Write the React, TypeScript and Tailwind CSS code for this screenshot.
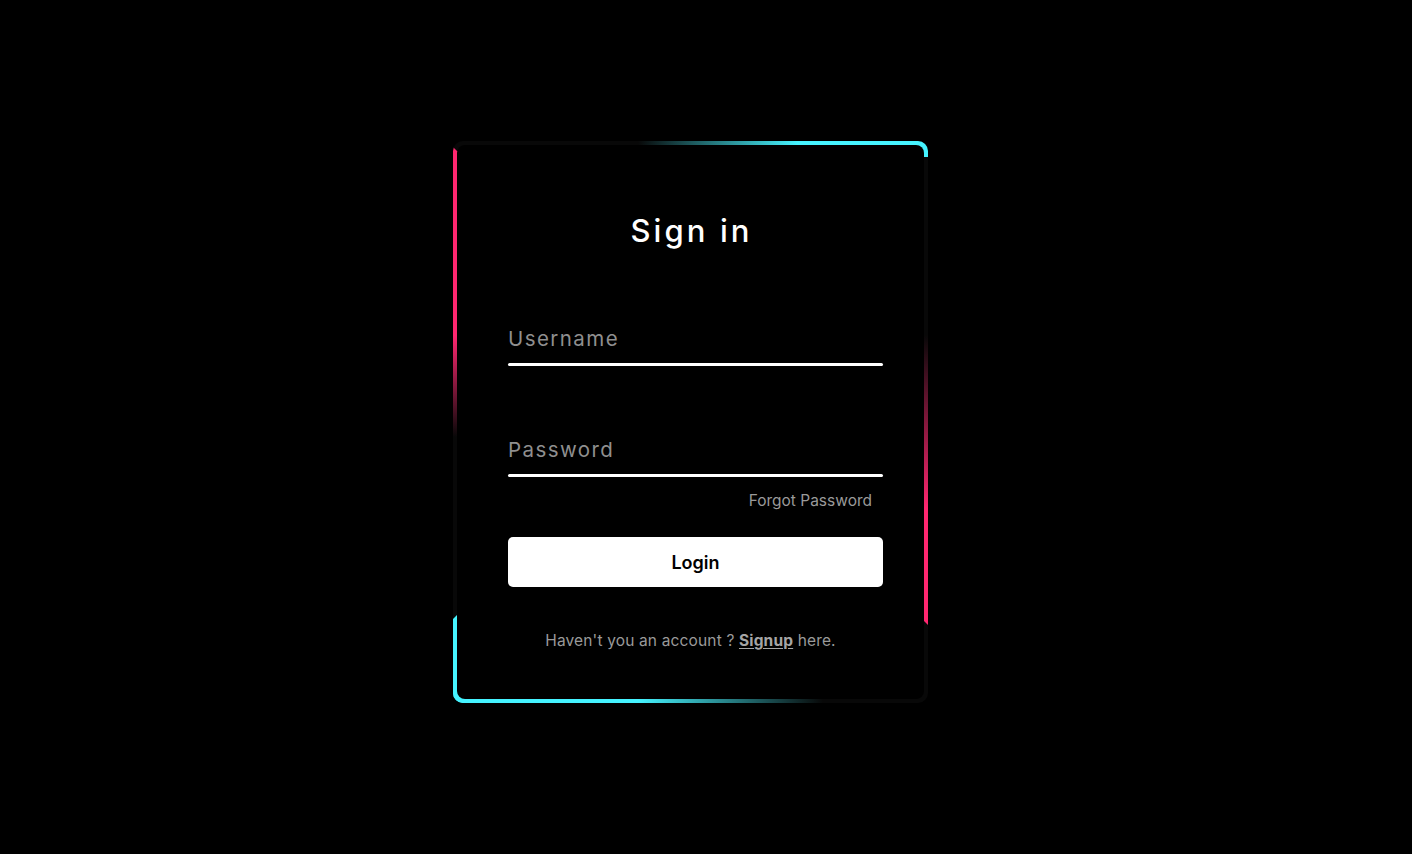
import React from "react";

export default function App() {
  const font = { fontFamily: "Inter, 'Open Sans', 'Noto Sans', sans-serif" };
  return (
    <div className="w-full min-h-[854px] bg-black flex items-center justify-center pr-[31px] pb-[10px]" style={font}>
      <div className="relative w-[475px] h-[562px] rounded-[10px] overflow-hidden bg-[#080808]">
        {/* top cyan */}
        <div className="absolute top-0 right-0 w-[290px] h-[16px] bg-[linear-gradient(to_right,transparent,#45f3ff_55%)]" />
        {/* left pink */}
        <div className="absolute left-0 top-[6px] w-[16px] h-[290px] bg-[linear-gradient(to_top,transparent,#ff2770_35%)] [clip-path:polygon(0_0,4px_4px,100%_4px,100%_100%,0_100%)]" />
        {/* right pink */}
        <div className="absolute right-0 bottom-[78px] w-[16px] h-[290px] bg-[linear-gradient(to_bottom,transparent,#ff2770_60%)] [clip-path:polygon(0_0,100%_0,100%_100%,calc(100%-4px)_calc(100%-4px),0_calc(100%-4px))]" />
        {/* bottom-left cyan */}
        <div className="absolute left-0 bottom-0 w-[370px] h-[16px] bg-[linear-gradient(to_right,#45f3ff_50%,transparent)]" />
        <div className="absolute left-0 bottom-0 w-[16px] h-[88px] bg-[#45f3ff] [clip-path:polygon(0_4px,4px_0,100%_0,100%_100%,0_100%)]" />
        {/* inner */}
        <div className="absolute inset-[4px] bg-black rounded-[8px] flex flex-col">
          <h2 className="text-center text-white text-[31px] font-medium tracking-[0.1em] mt-[64px] leading-[44px] pl-[2px]">Sign in</h2>
          <div className="pl-[51px] pr-[41px] mt-[55px]">
            <div className="h-[58px] flex flex-col justify-end">
              <div className="text-[#8f8f8f] text-[20.5px] tracking-[0.07em] leading-[28px] mb-[10px]">Username</div>
              <div className="h-[3px] bg-white rounded-full" />
            </div>
            <div className="h-[58px] flex flex-col justify-end mt-[53px]">
              <div className="text-[#8f8f8f] text-[20.5px] tracking-[0.07em] leading-[28px] mb-[10px]">Password</div>
              <div className="h-[3px] bg-white rounded-full" />
            </div>
            <div className="flex justify-end pr-[11px] mt-[14px]">
              <span className="text-[#9a9a9a] text-[15.5px] leading-[20px]">Forgot Password</span>
            </div>
            <button className="mt-[26px] w-full h-[50px] bg-white rounded-[5px] text-black text-[18px] font-semibold">Login</button>
          </div>
          <p className="text-center text-[#9a9a9a] text-[15.5px] mt-[44px] leading-[20px] tracking-[0.01em]">
            Haven't you an account ? <span className="font-bold text-[#a5a5a5] underline underline-offset-2">Signup</span> here.
          </p>
        </div>
      </div>
    </div>
  );
}
